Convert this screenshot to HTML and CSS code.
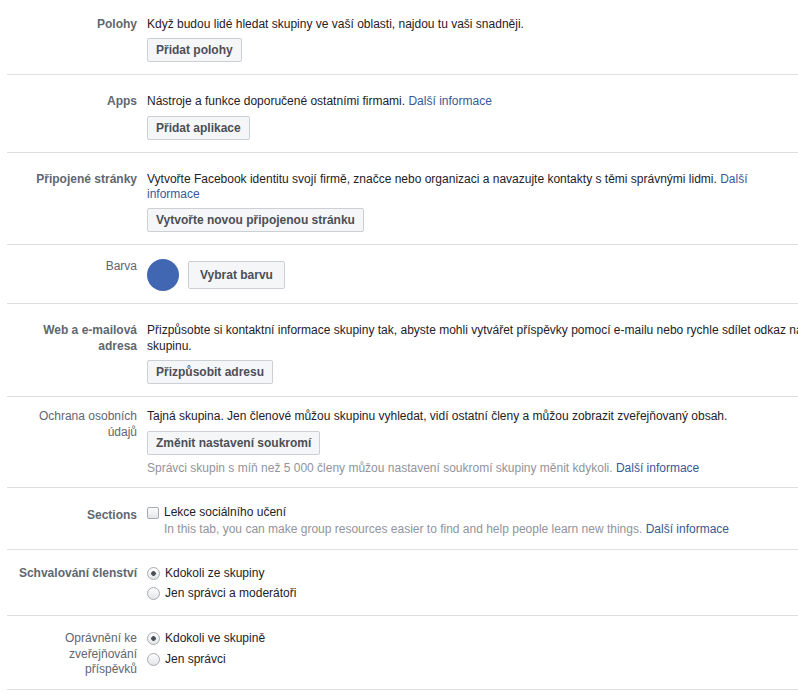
FILE: index.html
```html
<!DOCTYPE html>
<html lang="cs">
<head>
    <meta charset="UTF-8">
    <meta name="viewport" content="width=device-width, initial-scale=1.0">
    <title>Nastavení skupiny</title>
    <link rel="stylesheet" href="styles.css">
</head>
<body>
    <div class="settings">
        <div class="row row--first">
            <div class="row-label">Polohy</div>
            <div class="row-body">
                <p class="desc">Když budou lidé hledat skupiny ve vaší oblasti, najdou tu vaši snadněji.</p>
                <button class="btn">Přidat polohy</button>
            </div>
        </div>

        <div class="row">
            <div class="row-label">Apps</div>
            <div class="row-body">
                <p class="desc">Nástroje a funkce doporučené ostatními firmami. <a class="link" href="#">Další informace</a></p>
                <button class="btn">Přidat aplikace</button>
            </div>
        </div>

        <div class="row">
            <div class="row-label">Připojené stránky</div>
            <div class="row-body">
                <p class="desc desc--narrow">Vytvořte Facebook identitu svojí firmě, značce nebo organizaci a navazujte kontakty s těmi správnými lidmi. <a class="link" href="#">Další informace</a></p>
                <button class="btn">Vytvořte novou připojenou stránku</button>
            </div>
        </div>

        <div class="row row--color">
            <div class="row-label row-label--plain">Barva</div>
            <div class="row-body row-body--inline">
                <span class="swatch"></span>
                <button class="btn btn--large">Vybrat barvu</button>
            </div>
        </div>

        <div class="row">
            <div class="row-label">Web a e-mailová adresa</div>
            <div class="row-body">
                <p class="desc">Přizpůsobte si kontaktní informace skupiny tak, abyste mohli vytvářet příspěvky pomocí e-mailu nebo rychle sdílet odkaz na skupinu.</p>
                <button class="btn">Přizpůsobit adresu</button>
            </div>
        </div>

        <div class="row row--privacy">
            <div class="row-label row-label--plain">Ochrana osobních údajů</div>
            <div class="row-body">
                <p class="desc">Tajná skupina. Jen členové můžou skupinu vyhledat, vidí ostatní členy a můžou zobrazit zveřejňovaný obsah.</p>
                <button class="btn">Změnit nastavení soukromí</button>
                <p class="desc note">Správci skupin s míň než 5 000 členy můžou nastavení soukromí skupiny měnit kdykoli. <a class="link" href="#">Další informace</a></p>
            </div>
        </div>

        <div class="row row--check">
            <div class="row-label row-label--shift">Sections</div>
            <div class="row-body">
                <label class="option">
                    <input type="checkbox" class="checkbox">
                    <span>Lekce sociálního učení</span>
                </label>
                <p class="desc note note--indent">In this tab, you can make group resources easier to find and help people learn new things. <a class="link" href="#">Další informace</a></p>
            </div>
        </div>

        <div class="row row--radio">
            <div class="row-label">Schvalování členství</div>
            <div class="row-body options">
                <label class="option">
                    <input type="radio" name="approval" class="radio" checked>
                    <span>Kdokoli ze skupiny</span>
                </label>
                <label class="option">
                    <input type="radio" name="approval" class="radio">
                    <span>Jen správci a moderátoři</span>
                </label>
            </div>
        </div>

        <div class="row row--radio row--last">
            <div class="row-label row-label--plain">Oprávnění ke zveřejňování příspěvků</div>
            <div class="row-body options">
                <label class="option">
                    <input type="radio" name="posting" class="radio" checked>
                    <span>Kdokoli ve skupině</span>
                </label>
                <label class="option">
                    <input type="radio" name="posting" class="radio">
                    <span>Jen správci</span>
                </label>
            </div>
        </div>
    </div>
</body>
</html>
```

FILE: styles.css
```css
* {
    box-sizing: border-box;
}
body {
    margin: 0;
    overflow: hidden;
    background-color: #fff;
    color: #1d2129;
    font-family: "Liberation Sans", Arial, sans-serif;
    font-size: 12px;
    line-height: 1.28;
}
.settings {
    width: 830px;
    margin-left: 7px;
}
.row {
    display: grid;
    grid-template-columns: 130px 660px;
    column-gap: 10px;
    padding: 19px 0 12px;
    border-bottom: 1px solid #dddfe2;
}
.row--first {
    padding-top: 17px;
}
.row--color {
    padding-top: 14px;
}
.row--privacy {
    padding: 12px 0 11px;
}
.row--check {
    padding: 17px 0 11px;
}
.row--radio {
    padding: 16px 0 14px;
}
.row--last {
    padding: 15px 0 12px;
}
.row-label {
    padding-left: 8px;
    text-align: right;
    font-weight: bold;
    color: #606770;
}
.row-label--plain {
    font-weight: normal;
}
.row-label--shift {
    padding-top: 3px;
}
.row-body {
    display: flex;
    flex-direction: column;
    align-items: flex-start;
}
.row-body--inline {
    flex-direction: row;
    align-items: center;
    gap: 9px;
}
.desc {
    margin: 0;
}
.desc--narrow {
    max-width: 650px;
}
.note {
    color: #90949c;
}
.note--indent {
    margin-top: 2px;
    padding-left: 17px;
}
.link {
    color: #385898;
    text-decoration: none;
}
.btn {
    margin-top: 6px;
    height: 24px;
    padding: 0 8px;
    border: 1px solid #ccd0d5;
    border-radius: 2px;
    background-color: #f5f6f7;
    color: #4b4f56;
    font-family: "Liberation Sans", Arial, sans-serif;
    font-size: 12px;
    font-weight: bold;
    line-height: 22px;
    cursor: pointer;
}
.btn--large {
    margin-top: 0;
    height: 28px;
    padding: 0 11px;
    line-height: 26px;
}
.row--privacy .btn {
    margin: 6px 0 6px;
}
.swatch {
    width: 32px;
    height: 32px;
    border-radius: 50%;
    background-color: #4267b2;
}
.options {
    gap: 5px;
}
.option {
    display: flex;
    align-items: center;
    gap: 5px;
    cursor: pointer;
}
.checkbox, .radio {
    appearance: none;
    -webkit-appearance: none;
    flex: none;
    width: 12px;
    height: 12px;
    margin: 0;
    border: 1px solid #a8acb2;
    background: linear-gradient(#fdfdfd, #e3e5e8);
}
.checkbox {
    border-radius: 2px;
}
.radio {
    width: 13px;
    height: 13px;
    border-radius: 50%;
}
.radio:checked {
    background: radial-gradient(circle, #4b4f56 0 2px, transparent 2.6px), linear-gradient(#fdfdfd, #e3e5e8);
}
```
